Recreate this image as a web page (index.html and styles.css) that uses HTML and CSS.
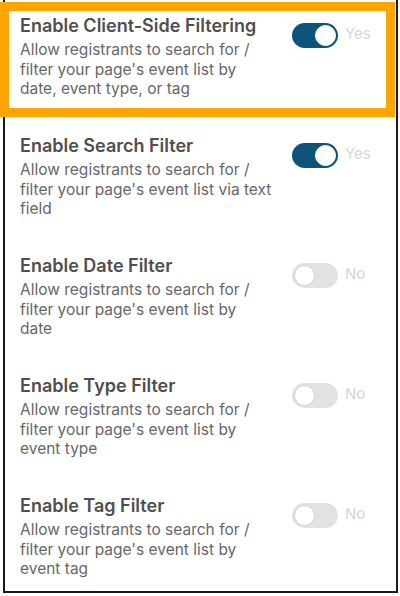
FILE: index.html
```html
<!DOCTYPE html>
<html lang="en">
<head>
  <meta charset="UTF-8">
  <meta name="viewport" content="width=device-width, initial-scale=1.0">
  <title>Event Filters</title>
  <link rel="stylesheet" href="styles.css">
</head>
<body>
  <div class="frame">
    <div class="row highlight">
      <div class="text">
        <h2>Enable Client-Side Filtering</h2>
        <p>Allow registrants to search for / filter your page's event list by date, event type, or tag</p>
      </div>
      <div class="toggle on">
        <span class="track"><span class="knob"></span></span>
        <span class="label">Yes</span>
      </div>
    </div>

    <div class="row">
      <div class="text">
        <h2>Enable Search Filter</h2>
        <p>Allow registrants to search for / filter your page's event list via text field</p>
      </div>
      <div class="toggle on">
        <span class="track"><span class="knob"></span></span>
        <span class="label">Yes</span>
      </div>
    </div>

    <div class="row">
      <div class="text">
        <h2>Enable Date Filter</h2>
        <p>Allow registrants to search for / filter your page's event list by date</p>
      </div>
      <div class="toggle">
        <span class="track"><span class="knob"></span></span>
        <span class="label">No</span>
      </div>
    </div>

    <div class="row">
      <div class="text">
        <h2>Enable Type Filter</h2>
        <p>Allow registrants to search for / filter your page's event list by event type</p>
      </div>
      <div class="toggle">
        <span class="track"><span class="knob"></span></span>
        <span class="label">No</span>
      </div>
    </div>

    <div class="row">
      <div class="text">
        <h2>Enable Tag Filter</h2>
        <p>Allow registrants to search for / filter your page's event list by event tag</p>
      </div>
      <div class="toggle">
        <span class="track"><span class="knob"></span></span>
        <span class="label">No</span>
      </div>
    </div>
  </div>
</body>
</html>
```

FILE: styles.css
```css
body {
  margin: 0;
  font-family: Inter, "Noto Sans", sans-serif;
  background: #fff;
}

.frame {
  margin-left: 3px;
  width: 395px;
  height: 593px;
  box-sizing: border-box;
  border: 2px solid #1a1a1a;
  border-top: none;
  padding-top: 11px;
  display: flex;
  flex-direction: column;
  gap: 23px;
}

.row {
  margin-left: 4px;
  width: 377px;
  height: 97px;
  box-sizing: border-box;
  padding: 5px 0 0 11px;
  display: flex;
  background: #fff;
}

.row.highlight {
  outline: 9px solid #ffa500;
}

.text {
  width: 252px;
  margin-right: 20px;
  flex: none;
}

.text h2 {
  margin: 0;
  font-size: 18px;
  line-height: 20px;
  font-weight: 600;
  color: #4f4f4f;
  white-space: nowrap;
}

.text p {
  margin: 4px 0 0;
  font-size: 15.5px;
  line-height: 19.5px;
  color: #676767;
}

.toggle {
  display: flex;
  align-items: flex-start;
  gap: 7px;
  margin-top: 7px;
}

.track {
  width: 46px;
  height: 25px;
  border-radius: 13px;
  background: #e2e2e2;
  position: relative;
}

.knob {
  position: absolute;
  top: 2px;
  left: 2px;
  width: 19px;
  height: 19px;
  border-radius: 50%;
  background: #fff;
  border: 1px solid #d2d2d2;
}

.toggle.on .track {
  background: #0c5479;
}

.toggle.on .knob {
  left: auto;
  right: 2px;
  border-color: #fff;
}

.label {
  font-size: 15px;
  line-height: 20px;
  color: #d3d6d9;
  margin-top: 1px;
}
```
